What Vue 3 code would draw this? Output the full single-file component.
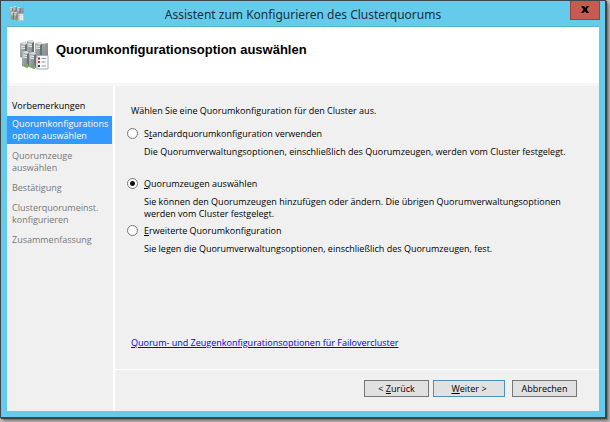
<template>
  <div class="desktop">
    <div class="window">
      <div class="title-bar">
        <svg class="app-icon" viewBox="0 0 30 30" aria-hidden="true">
          <use href="#cluster-icon" />
        </svg>
        <span class="title">Assistent zum Konfigurieren des Clusterquorums</span>
        <button type="button" class="close" aria-label="Schließen">
          <svg viewBox="0 0 10 8"><path d="M1 0H4L5.2 2 6.6 0H9L6.6 3.5 9.2 7H6.2L4.9 5.2 3.5 7H.8L3.5 3.6Z" /></svg>
        </button>
      </div>

      <div class="client">
        <header class="page-header">
          <svg class="header-icon" viewBox="0 0 30 30" aria-hidden="true">
            <defs>
              <linearGradient id="metal" x1="0" x2="1" y1="0" y2="1">
                <stop offset="0" stop-color="#b4bcbc" />
                <stop offset="0.5" stop-color="#949d9d" />
                <stop offset="1" stop-color="#737e7e" />
              </linearGradient>
            </defs>
            <g id="cluster-icon">
              <path d="M21 4L29 3V19H21Z" fill="url(#metal)" />
              <path d="M24 4V17M27 4V17" stroke="#89928f" />
              <g v-for="server in servers" :key="`${server.x}-${server.y}`" :transform="`translate(${server.x} ${server.y})`">
                <path d="M0 1L5 0 7 2V15L5 17 0 15Z" fill="url(#metal)" />
                <path d="M0 1L5 0 7 2 5 3Z" fill="#dce0e0" />
                <path d="M5 3L7 2V15L5 17Z" fill="#687373" />
                <path d="M1 4L5 4.500M1 6L5 6.500" stroke="#eef1f1" />
                <path v-if="server.led" d="M4 13.500L6 13V16L4 16.500Z" fill="#62c91c" />
              </g>
              <path d="M18 15.500H29V29H18Z" fill="#fbfcfe" stroke="#a4a8b5" />
              <path d="M19 17.500H21V19.500H19Z" fill="#8d2934" />
              <path d="M19 21H21V23H19Z" fill="#e12b2b" />
              <path d="M19 25H21V27H19Z" fill="#353b58" />
              <path d="M22.500 18.500H27M22.500 22H26.500M22.500 26H27" stroke="#8e91a5" />
            </g>
          </svg>
          <h1>Quorumkonfigurationsoption auswählen</h1>
        </header>

        <div class="body">
          <nav class="steps">
            <ol>
              <li v-for="step in steps" :key="step.name" :class="step.state">
                <template v-for="(line, i) in step.lines" :key="line"><br v-if="i">{{ line }}</template>
              </li>
            </ol>
          </nav>

          <form class="main" @submit.prevent>
            <fieldset>
              <legend>Wählen Sie eine Quorumkonfiguration für den Cluster aus.</legend>
              <div v-for="option in options" :key="option.id" class="option" :class="{ spaced: option.spaced }">
                <input :id="option.id" v-model="selected" type="radio" name="quorum" :value="option.id">
                <label :for="option.id">{{ option.before }}<u>{{ option.key }}</u>{{ option.after }}</label>
                <p>
                  <template v-for="(line, i) in option.lines" :key="line"><br v-if="i">{{ line }}</template>
                </p>
              </div>
            </fieldset>
            <a href="#" class="help" @click.prevent>Quorum- und Zeugenkonfigurationsoptionen für Failovercluster</a>
            <div class="buttons">
              <button type="button">&lt; <u>Z</u>urück</button>
              <button type="submit" class="default"><u>W</u>eiter &gt;</button>
              <button type="button" class="cancel">Abbrechen</button>
            </div>
          </form>
        </div>
      </div>
    </div>
  </div>
</template>

<script setup>
import { ref } from 'vue'

const selected = ref('witness')

const servers = [
  { x: 1, y: 2 },
  { x: 8, y: 0 },
  { x: 16, y: 2 },
  { x: 3, y: 11, led: true },
  { x: 10, y: 12, led: true }
]

const steps = [
  { name: 'start', lines: ['Vorbemerkungen'], state: 'done' },
  { name: 'option', lines: ['Quorumkonfigurations', 'option auswählen'], state: 'current' },
  { name: 'witness', lines: ['Quorumzeuge', 'auswählen'] },
  { name: 'confirm', lines: ['Bestätigung'] },
  { name: 'configure', lines: ['Clusterquorumeinst.', 'konfigurieren'] },
  { name: 'summary', lines: ['Zusammenfassung'] }
]

const options = [
  {
    id: 'standard',
    before: 'S',
    key: 't',
    after: 'andardquorumkonfiguration verwenden',
    lines: ['Die Quorumverwaltungsoptionen, einschließlich des Quorumzeugen, werden vom Cluster festgelegt.'],
    spaced: true
  },
  {
    id: 'witness',
    before: '',
    key: 'Q',
    after: 'uorumzeugen auswählen',
    lines: [
      'Sie können den Quorumzeugen hinzufügen oder ändern. Die übrigen Quorumverwaltungsoptionen',
      'werden vom Cluster festgelegt.'
    ]
  },
  {
    id: 'advanced',
    before: '',
    key: 'E',
    after: 'rweiterte Quorumkonfiguration',
    lines: ['Sie legen die Quorumverwaltungsoptionen, einschließlich des Quorumzeugen, fest.']
  }
]
</script>

<style>
body {
  background: #c4c4c4;
}
</style>

<style scoped>
* {
  box-sizing: border-box;
}

.desktop {
  display: flex;
  min-height: 100vh;
  padding: 0 4px 4px 0;
  font: 9px/12px "Open Sans", "Liberation Sans", sans-serif;
  color: #000;
}

.window {
  display: flex;
  flex: 1;
  flex-direction: column;
  padding: 0 6px 6px;
  border: 1px solid #3b454a;
  background: #66cbea;
  box-shadow: 1px 1px 1px #444, 3px 3px 3px #777;
}

.title-bar {
  display: grid;
  grid-template-columns: 32px 1fr 32px;
  height: 26px;
  border-bottom: 1px solid #5bb4d2;
}

.app-icon {
  width: 15px;
  height: 15px;
  margin: 5px 0 0 2px;
}

.title {
  font: 12px/27px "Noto Sans", sans-serif;
  text-align: center;
  color: #17303a;
}

.close {
  display: flex;
  align-items: center;
  justify-content: center;
  width: 30px;
  height: 19px;
  margin-left: 3px;
  padding: 0;
  border: 1px solid #99453f;
  border-top: 0;
  background: #c75b52;
}

.close svg {
  width: 10px;
  height: 8px;
}

.client {
  display: flex;
  flex: 1;
  flex-direction: column;
  background: #f0f0f0;
}

.page-header {
  display: flex;
  height: 59px;
  padding: 13px 12px 0;
  border-bottom: 3px solid #f7f7f7;
  background: #fff;
}

.header-icon {
  width: 30px;
  height: 30px;
  margin-right: 7px;
}

h1 {
  margin: 2px 0 0;
  font: bold 13px/16px "Liberation Sans", Arial, sans-serif;
  color: #000;
}

.body {
  display: flex;
  flex: 1;
}

.steps {
  width: 108px;
  border-right: 2px solid #fff;
}

ol {
  margin: 0;
  padding: 10px 1px 0 0;
  list-style: none;
}

li {
  padding: 4px 0 4px 5px;
  color: #777;
}

li.done {
  color: #000;
}

li.current {
  margin-bottom: 2px;
  padding-top: 2px;
  padding-bottom: 2px;
  background: #3399ff;
  color: #fff;
}

.main {
  display: flex;
  flex: 1;
  flex-direction: column;
}

fieldset {
  margin: 0;
  padding: 19px 16px 0 12px;
  border: 0;
}

legend {
  float: left;
  width: 100%;
  margin-bottom: 11px;
  padding: 0 4px;
}

.option {
  display: grid;
  clear: both;
  grid-template-columns: 11px 1fr;
  column-gap: 6px;
  row-gap: 6px;
  padding-bottom: 5px;
}

.option.spaced {
  padding-bottom: 20px;
}

input {
  width: 11px;
  height: 11px;
  margin: 0;
  appearance: none;
  border: 1px solid #777;
  border-radius: 50%;
  background: #fff;
}

input:checked {
  background: radial-gradient(circle, #111 0 2px, #fff 3px);
}

.option p {
  grid-column: 2;
  margin: 0;
}

.help {
  margin: auto 16px 20px;
  color: #0000f0;
}

.buttons {
  display: flex;
  justify-content: flex-end;
  height: 42px;
  padding: 10px 22px 0 0;
  border-top: 1px solid #fff;
}

.buttons button {
  width: 65px;
  height: 17px;
  padding: 0;
  border: 1px solid #777;
  background: #e1e1e1;
  font: inherit;
  color: #000;
}

.buttons .default {
  width: 72px;
  margin-left: 4px;
  border-color: #4c91c4;
}

.buttons .cancel {
  margin-left: 7px;
}
</style>
